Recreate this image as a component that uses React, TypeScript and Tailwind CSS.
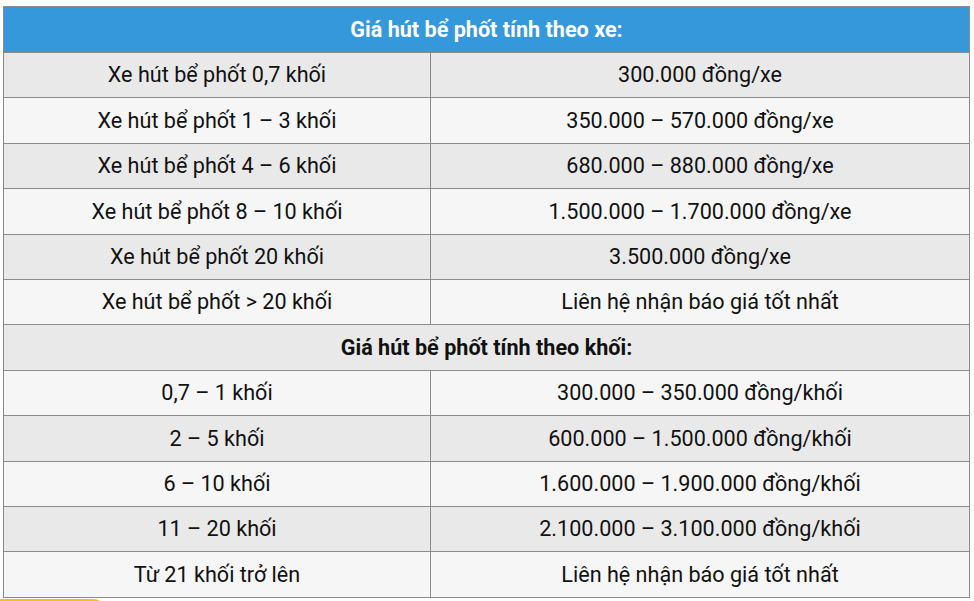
const rowsXe = [
  ['Xe hút bể phốt 0,7 khối', '300.000 đồng/xe'],
  ['Xe hút bể phốt 1 – 3 khối', '350.000 – 570.000 đồng/xe'],
  ['Xe hút bể phốt 4 – 6 khối', '680.000 – 880.000 đồng/xe'],
  ['Xe hút bể phốt 8 – 10 khối', '1.500.000 – 1.700.000 đồng/xe'],
  ['Xe hút bể phốt 20 khối', '3.500.000 đồng/xe'],
  ['Xe hút bể phốt > 20 khối', 'Liên hệ nhận báo giá tốt nhất'],
];

const rowsKhoi = [
  ['0,7 – 1 khối', '300.000 – 350.000 đồng/khối'],
  ['2 – 5 khối', '600.000 – 1.500.000 đồng/khối'],
  ['6 – 10 khối', '1.600.000 – 1.900.000 đồng/khối'],
  ['11 – 20 khối', '2.100.000 – 3.100.000 đồng/khối'],
  ['Từ 21 khối trở lên', 'Liên hệ nhận báo giá tốt nhất'],
];

function Row({ cells, odd }: { cells: string[]; odd: boolean }) {
  return (
    <tr className={`h-[45.4px] ${odd ? 'bg-[#e9e9e9]' : 'bg-[#f6f6f6]'}`}>
      <td className="border border-[#8c8c8c] text-center align-middle">{cells[0]}</td>
      <td className="border border-[#8c8c8c] text-center align-middle">{cells[1]}</td>
    </tr>
  );
}

export default function App() {
  return (
    <div
      className="w-[974px] h-[601px] overflow-hidden bg-white pt-[6px] pl-[3px] text-[#111]"
      style={{ fontFamily: 'Roboto, "Noto Sans", sans-serif' }}
    >
      <table className="w-[967px] border-collapse text-[21.6px] leading-none table-fixed">
        <colgroup>
          <col className="w-[427px]" />
          <col />
        </colgroup>
        <tbody>
          <tr className="h-[46px] bg-[#3598db]">
            <td colSpan={2} className="border border-[#8c8c8c] text-center font-bold text-white">
              Giá hút bể phốt tính theo xe:
            </td>
          </tr>
          {rowsXe.map((r, i) => (
            <Row key={r[0]} cells={r} odd={i % 2 === 0} />
          ))}
          <tr className="h-[45.4px] bg-[#e9e9e9]">
            <td colSpan={2} className="border border-[#8c8c8c] text-center font-bold">
              Giá hút bể phốt tính theo khối:
            </td>
          </tr>
          {rowsKhoi.map((r, i) => (
            <Row key={r[0]} cells={r} odd={i % 2 === 1} />
          ))}
        </tbody>
      </table>
      <div className="-ml-[3px] mt-[1px] h-[20px] w-[104px] rounded-r-full bg-[#f6c21a]" />
    </div>
  );
}
